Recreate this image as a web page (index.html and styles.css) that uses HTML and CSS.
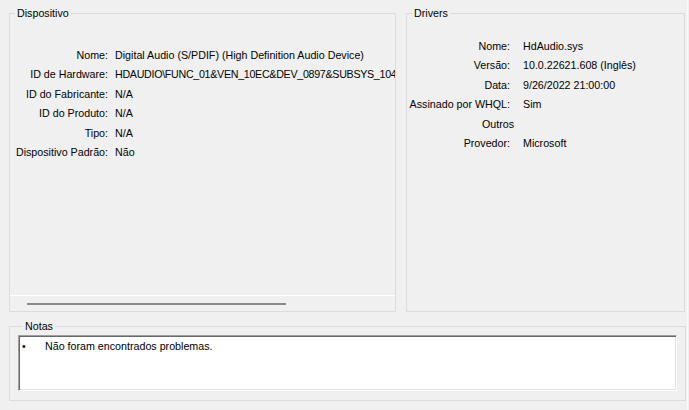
FILE: index.html
```html
<!doctype html>
<html lang="pt">
  <head>
    <meta charset="UTF-8" />
    <title>Propriedades do dispositivo</title>
    <link rel="stylesheet" href="styles.css">
  </head>
  <body>
    <div class="top-row">
      <!-- Dispositivo -->
      <fieldset class="group group-device">
        <legend>Dispositivo</legend>
        <div class="scroll-view">
          <div class="props props-device">
            <span class="label">Nome:</span><span class="value">Digital Audio (S/PDIF) (High Definition Audio Device)</span>
            <span class="label">ID de Hardware:</span><span class="value value-id">HDAUDIO\FUNC_01&amp;VEN_10EC&amp;DEV_0897&amp;SUBSYS_10431F43&amp;REV_1000</span>
            <span class="label">ID do Fabricante:</span><span class="value">N/A</span>
            <span class="label">ID do Produto:</span><span class="value">N/A</span>
            <span class="label">Tipo:</span><span class="value">N/A</span>
            <span class="label">Dispositivo Padrão:</span><span class="value">Não</span>
          </div>
        </div>
        <div class="hscroll">
          <div class="hscroll-thumb"></div>
        </div>
      </fieldset>

      <!-- Drivers -->
      <fieldset class="group group-drivers">
        <legend>Drivers</legend>
        <div class="props props-drivers">
          <span class="label">Nome:</span><span class="value">HdAudio.sys</span>
          <span class="label">Versão:</span><span class="value">10.0.22621.608 (Inglês)</span>
          <span class="label">Data:</span><span class="value">9/26/2022 21:00:00</span>
          <span class="label">Assinado por WHQL:</span><span class="value">Sim</span>
          <span class="label label-nocolon">Outros</span><span class="value"></span>
          <span class="label">Provedor:</span><span class="value">Microsoft</span>
        </div>
      </fieldset>
    </div>

    <!-- Notas -->
    <fieldset class="group group-notes">
      <legend>Notas</legend>
      <div class="notes-box">
        <ul class="notes-list">
          <li>Não foram encontrados problemas.</li>
        </ul>
      </div>
    </fieldset>
  </body>
</html>
```

FILE: styles.css
```css
* {
  margin: 0;
  padding: 0;
  box-sizing: border-box;
}

body {
  width: 689px;
  height: 410px;
  overflow: hidden;
  background: #f0f0f0;
  font-family: "Liberation Sans", Arial, sans-serif;
  font-size: 10.7px;
  color: #000;
  padding: 6px 0 0 9px;
  position: relative;
}

/* край окна справа */
body::after {
  content: '';
  position: absolute;
  top: 0;
  right: 1px;
  width: 1px;
  height: 100%;
  background: #fafafa;
}

/* Группы */
.group {
  border: 1px solid #dcdcdc;
  padding: 0;
  margin: 0;
  min-width: 0;
}

.group legend {
  margin-left: 5px;
  padding: 0 2px;
  line-height: 14px;
}

.top-row {
  display: flex;
  gap: 10px;
}

.group-device {
  width: 387px;
  height: 306px;
  display: flex;
  flex-direction: column;
}

.group-drivers {
  width: 279px;
  height: 306px;
}

/* Таблицы свойств */
.props {
  display: grid;
  grid-auto-rows: 19.5px;
  align-items: center;
  white-space: nowrap;
}

.props .label {
  text-align: right;
}

.props .value {
  overflow: hidden;
}

.value-id {
  letter-spacing: -0.3px;
}

.scroll-view {
  flex: 1;
  overflow: hidden;
}

.props-device {
  padding-top: 25px;
  grid-template-columns: 98px minmax(0, 1fr);
  column-gap: 7px;
}

.props-drivers {
  padding-top: 16px;
  grid-template-columns: 103px minmax(0, 1fr);
  column-gap: 13px;
}

.label-nocolon {
  margin-right: -4px;
}

/* Горизонтальная прокрутка */
.hscroll {
  height: 16px;
  border-top: 1px solid #ffffff;
  padding-top: 7px;
}

.hscroll-thumb {
  margin-left: 17px;
  width: 259px;
  height: 2px;
  background: #8a8a8a;
}

/* Заметки */
.group-notes {
  width: 677px;
  height: 82px;
  margin-top: 7px;
  padding: 2px 8px 0 8px;
}

.notes-box {
  height: 56px;
  width: 659px;
  background: #fff;
  border: 1px solid;
  border-color: #a0a0a0 #ffffff #ffffff #a0a0a0;
  box-shadow: inset 1px 1px 0 #696969, inset -1px -1px 0 #e3e3e3;
  padding: 3px 0 0 3px;
}

.notes-list {
  list-style: none;
}

.notes-list li {
  position: relative;
  padding-left: 23px;
  line-height: 14px;
}

.notes-list li::before {
  content: '\2022';
  position: absolute;
  left: 0;
  top: 0;
}
```
